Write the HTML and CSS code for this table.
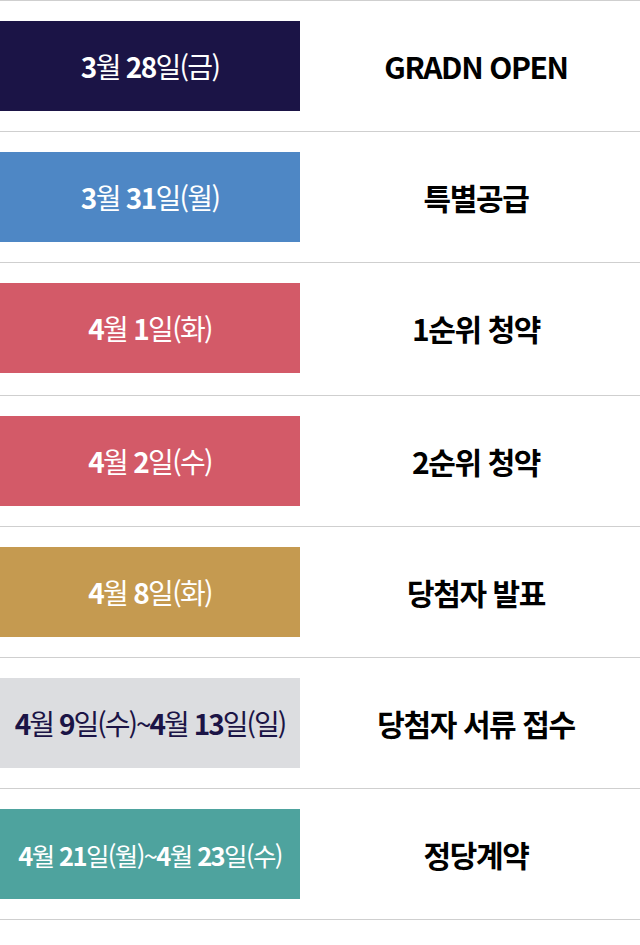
FILE: index.html
```html
<!DOCTYPE html>
<html lang="ko">
<head>
<meta charset="utf-8">
<link rel="stylesheet" href="styles.css">
</head>
<body>
<ul class="schedule">
  <li class="row"><div class="date navy"><span><b>3</b>월 <b>28</b>일(금)</span></div><div class="event">GRADN OPEN</div></li>
  <li class="row"><div class="date blue"><span><b>3</b>월 <b>31</b>일(월)</span></div><div class="event">특별공급</div></li>
  <li class="row"><div class="date red"><span><b>4</b>월 <b>1</b>일(화)</span></div><div class="event">1순위 청약</div></li>
  <li class="row"><div class="date red"><span><b>4</b>월 <b>2</b>일(수)</span></div><div class="event">2순위 청약</div></li>
  <li class="row"><div class="date gold"><span><b>4</b>월 <b>8</b>일(화)</span></div><div class="event">당첨자 발표</div></li>
  <li class="row"><div class="date grey wide"><span><b>4</b>월 <b>9</b>일(수)~<b>4</b>월 <b>13</b>일(일)</span></div><div class="event">당첨자 서류 접수</div></li>
  <li class="row"><div class="date teal small"><span><b>4</b>월 <b>21</b>일(월)~<b>4</b>월 <b>23</b>일(수)</span></div><div class="event">정당계약</div></li>
</ul>
</body>
</html>
```
FILE: styles.css
```css
html, body {
  margin: 0;
  padding: 0;
  background: #fff;
}
body {
  font-family: "Noto Sans CJK KR", "Noto Sans", sans-serif;
}
.schedule {
  list-style: none;
  margin: 0;
  padding: 0;
  border-bottom: 1px solid #cfcfcf;
}
.row {
  display: flex;
  align-items: center;
  padding: 20px 0;
  border-top: 1px solid #cfcfcf;
}
.row:nth-child(3) {
  padding-bottom: 22px;
}
.date {
  width: 300px;
  height: 90px;
  flex: none;
  display: flex;
  align-items: center;
  justify-content: center;
  color: #fff;
  font-size: 28px;
  font-weight: 400;
  letter-spacing: -1.7px;
  white-space: nowrap;
}
.date b {
  font-weight: 700;
}
.date.wide {
  letter-spacing: -2px;
}
.date.small {
  font-size: 25.5px;
  letter-spacing: -1.6px;
}
.navy { background: #1b1446; }
.blue { background: #4e87c5; }
.red { background: #d35a68; }
.gold { background: #c59a50; }
.grey { background: #dcdde0; color: #1b1446; }
.teal { background: #4ea39e; }
.event {
  flex: 1;
  text-align: center;
  padding-left: 12px;
  font-size: 30px;
  font-weight: 700;
  letter-spacing: -1.4px;
  color: #000;
}
```
